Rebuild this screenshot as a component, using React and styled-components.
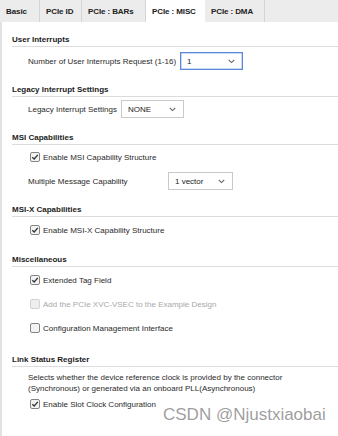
import React from 'react';
import styled, { createGlobalStyle } from 'styled-components';

const GlobalStyle = createGlobalStyle`
	html, body {
		margin: 0;
		padding: 0;
		background: #ffffff;
	}
	body {
		font-family: "Liberation Sans", Arial, sans-serif;
		font-size: 8px;
		color: #262626;
	}
`;

const tabs = [
	{ label: 'Basic', width: 40 },
	{ label: 'PCIe ID', width: 42 },
	{ label: 'PCIe : BARs', width: 64 },
	{ label: 'PCIe : MISC', width: 59, active: true },
	{ label: 'PCIe : DMA', width: 60 }
];

const Chevron = () => (
	<svg width='7' height='5' viewBox='0 0 7 5'>
		<polyline points='0.8,1 3.5,3.6 6.2,1' fill='none' stroke='#6a6a6a' strokeWidth='1.1' />
	</svg>
);

const Select = ({ value, width, focused }) => (
	<SelectBox $width={width} $focused={focused}>
		<span>{value}</span>
		<Chevron />
	</SelectBox>
);

const Check = ({ checked, disabled, children }) => (
	<CheckRow $disabled={disabled}>
		<Box $disabled={disabled}>
			{checked && (
				<svg width='8' height='8' viewBox='0 0 8 8'>
					<polyline points='1.3,4.2 3.2,6 6.8,1.8' fill='none' stroke='#333' strokeWidth='1.3' />
				</svg>
			)}
		</Box>
		<span>{children}</span>
	</CheckRow>
);

const App = () => {
	return (
		<>
			<GlobalStyle />
			<Page>
				<TabBar>
					{tabs.map(t => (
						<Tab key={t.label} $width={t.width} $active={t.active}>
							{t.label}
						</Tab>
					))}
				</TabBar>
				<Panel>
					<Section>
						<Heading>User Interrupts</Heading>
						<Body $top={4}>
							<FieldRow>
								<Label>Number of User Interrupts Request (1-16)</Label>
								<Select value='1' width={63} focused />
							</FieldRow>
						</Body>
					</Section>

					<Section>
						<Heading>Legacy Interrupt Settings</Heading>
						<Body $top={2}>
							<FieldRow>
								<Label>Legacy Interrupt Settings</Label>
								<Select value='NONE' width={63} />
							</FieldRow>
						</Body>
					</Section>

					<Section>
						<Heading>MSI Capabilities</Heading>
						<Body $top={2}>
							<Check checked>Enable MSI Capability Structure</Check>
							<FieldRow>
								<Label $width={136}>Multiple Message Capability</Label>
								<Select value='1 vector' width={65} />
							</FieldRow>
						</Body>
					</Section>

					<Section>
						<Heading>MSI-X Capabilities</Heading>
						<Body $top={3}>
							<Check checked>Enable MSI-X Capability Structure</Check>
						</Body>
					</Section>

					<Section $extra={1}>
						<Heading>Miscellaneous</Heading>
						<Body $top={3}>
							<Check checked>Extended Tag Field</Check>
							<Check disabled>Add the PCIe XVC-VSEC to the Example Design</Check>
							<Check>Configuration Management Interface</Check>
						</Body>
					</Section>

					<Section $extra={3}>
						<Heading>Link Status Register</Heading>
						<Body $top={5} $gap={0}>
							<Note>
								Selects whether the device reference clock is provided by the connector
								<br />
								(Synchronous) or generated via an onboard PLL(Asynchronous)
							</Note>
							<Check checked>Enable Slot Clock Configuration</Check>
						</Body>
					</Section>

					<Watermark>CSDN @Njustxiaobai</Watermark>
				</Panel>
			</Page>
		</>
	);
};

export default App;

const Page = styled.div`
	width: 338px;
	height: 436px;
	overflow: hidden;
	display: flex;
	flex-direction: column;
	background: #ffffff;
`;

const TabBar = styled.div`
	display: flex;
	height: 22px;
	background: #ececec;
	flex-shrink: 0;
`;

const Tab = styled.div`
	width: ${props => props.$width}px;
	box-sizing: border-box;
	display: flex;
	align-items: center;
	padding: 1px 0 0 6px;
	font-weight: bold;
	font-size: 8px;
	color: #222;
	background: ${props => (props.$active ? '#ffffff' : 'transparent')};
	border-right: 1px solid ${props => (props.$active ? '#ffffff' : '#d5d5d5')};
	letter-spacing: -0.1px;
`;

const Panel = styled.div`
	position: relative;
	flex: 1;
	border-left: 2px solid #e2e2e2;
	padding: 13px 0 0 10px;
	display: flex;
	flex-direction: column;
	gap: 14px;
`;

const Section = styled.section`
	display: flex;
	flex-direction: column;
	margin-top: ${props => props.$extra || 0}px;
`;

const Heading = styled.div`
	font-weight: bold;
	font-size: 8px;
	line-height: 10px;
	color: #1b1b1b;
	padding-bottom: 1px;
	border-bottom: 1px solid #dcdcdc;
`;

const Body = styled.div`
	display: flex;
	flex-direction: column;
	gap: ${props => (props.$gap === undefined ? 4 : props.$gap)}px;
	padding: ${props => props.$top}px 0 0 16px;
`;

const FieldRow = styled.div`
	display: flex;
	align-items: center;
	height: 20px;
	gap: 4px;
`;

const Label = styled.span`
	${props => props.$width && `width: ${props.$width}px; flex-shrink: 0;`}
	color: #2a2a2a;
	white-space: nowrap;
`;

const SelectBox = styled.div`
	width: ${props => props.$width}px;
	height: 18px;
	box-sizing: border-box;
	display: flex;
	align-items: center;
	justify-content: space-between;
	padding: 0 7px 0 6px;
	background: #ffffff;
	border: 1px solid ${props => (props.$focused ? '#5b87d8' : '#c9c9c9')};
	box-shadow: ${props => (props.$focused ? 'inset 0 0 0 0.5px #8fb0ea' : 'none')};
	color: #222;
`;

const CheckRow = styled.div`
	display: flex;
	align-items: center;
	height: 20px;
	gap: 3px;
	padding-left: 2px;
	color: ${props => (props.$disabled ? '#a9a9a9' : '#2a2a2a')};
	white-space: nowrap;
`;

const Box = styled.span`
	width: 10px;
	height: 10px;
	box-sizing: border-box;
	display: flex;
	align-items: center;
	justify-content: center;
	border-radius: 2px;
	border: 1px solid ${props => (props.$disabled ? '#d2d2d2' : '#858585')};
	background: ${props => (props.$disabled ? '#eeeeee' : '#f3f3f3')};
`;

const Note = styled.div`
	line-height: 11px;
	color: #2a2a2a;
	white-space: nowrap;
`;

const Watermark = styled.div`
	position: absolute;
	left: 161px;
	top: 383px;
	font-family: "Liberation Sans", Arial, sans-serif;
	font-size: 17px;
	color: rgba(125, 125, 125, 0.75);
	text-shadow: 0 0 1px rgba(255, 255, 255, 0.8);
	white-space: nowrap;
`;
